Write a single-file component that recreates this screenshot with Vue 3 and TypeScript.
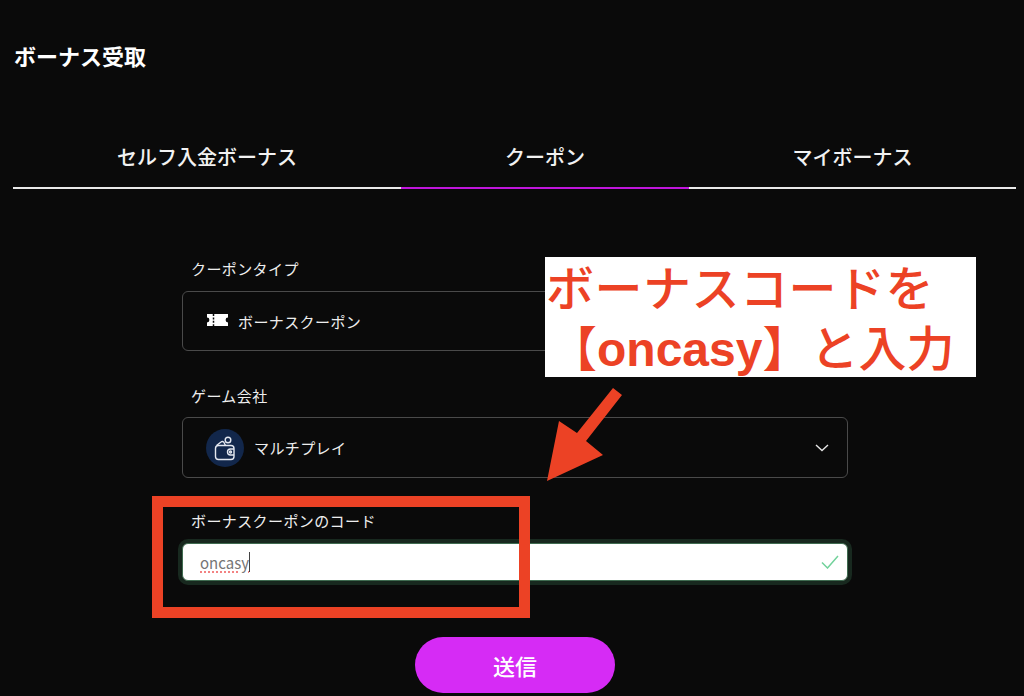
<script setup lang="ts">
const tabs = [
  { label: 'セルフ入金ボーナス', grow: 388, active: false },
  { label: 'クーポン', grow: 288, active: true },
  { label: 'マイボーナス', grow: 327, active: false },
]
</script>

<template>
  <main class="page">
    <h1 class="title">ボーナス受取</h1>
    <nav class="tabs">
      <div
        v-for="t in tabs"
        :key="t.label"
        class="tab"
        :class="{ active: t.active }"
        :style="{ flexGrow: t.grow }"
      >{{ t.label }}</div>
    </nav>

    <form class="form" @submit.prevent>
      <div class="label first">クーポンタイプ</div>
      <div class="select">
        <svg class="ticket" width="22" height="14" viewBox="0 0 22 14">
          <path fill="#fff" d="M0 1h21v3.600a2.400 2.400 0 0 0 0 4.800V13H0V9.400a2.400 2.400 0 0 0 0-4.800z" />
          <path stroke="#0a0a0a" stroke-width="1.500" stroke-dasharray="2 1.400" d="M6.500 1v12" />
        </svg>
        <span>ボーナスクーポン</span>
      </div>

      <div class="label second">ゲーム会社</div>
      <div class="select company">
        <span class="badge">
          <svg width="26" height="26" viewBox="0 0 26 26" fill="none" stroke="#e4e8f0" stroke-width="1.400">
            <rect x="3.500" y="10.500" width="18.500" height="14" rx="3" />
            <path d="M4.500 10.500L9 7a2 2 0 0 1 3 0.500L13.500 10.500" />
            <circle cx="16" cy="5" r="2.800" />
            <path d="M22 14h-3.500a3 3 0 0 0 0 6H22" />
            <circle cx="18.500" cy="17" r="1" />
          </svg>
        </span>
        <span>マルチプレイ</span>
        <svg class="chev" width="14" height="8" viewBox="0 0 14 8" fill="none" stroke="#e6e6e6" stroke-width="1.400">
          <path d="M1 1l6 5.500L13 1" />
        </svg>
      </div>

      <div class="label third">ボーナスクーポンのコード</div>
      <div class="input">
        <span class="typed">oncasy</span><span class="caret"></span>
        <svg class="check" width="18" height="14" viewBox="0 0 18 14" fill="none" stroke="#72d29b" stroke-width="1.500">
          <path d="M1 7.500l5.500 5.500L17 1" />
        </svg>
      </div>

      <button class="send" type="button">送信</button>
    </form>

    <div class="callout">
      <div class="l1">ボーナスコードを</div>
      <div class="l2">【<span class="latin">oncasy</span>】と入力</div>
    </div>
    <svg class="arrow" width="90" height="100" viewBox="0 0 90 100">
      <path fill="#ec4225" d="M68 1L77 8L41 54L58 68L2 94L14 34L32 46Z" />
    </svg>
    <div class="frame"></div>
  </main>
</template>

<style>
html, body { margin: 0; background: #0a0a0a; }
</style>

<style scoped>
.page {
  position: relative;
  width: 1024px;
  height: 696px;
  overflow: hidden;
  background: #0a0a0a;
  color: #fff;
  font-family: "Noto Sans CJK JP", "Noto Sans", sans-serif;
}
.title {
  margin: 0;
  padding: 39px 0 0 14px;
  font-size: 22px;
  line-height: 32px;
  font-weight: 700;
}
.tabs {
  display: flex;
  margin: 60px 8px 0 13px;
}
.tab {
  flex: 1 1 0;
  height: 58px;
  box-sizing: border-box;
  border-bottom: 2px solid #e9e9e9;
  text-align: center;
  font-size: 20px;
  line-height: 52px;
  font-weight: 500;
  color: #f2f2f2;
}
.tab.active { border-bottom-color: #c016dc; }
.form {
  display: flex;
  flex-direction: column;
  width: 666px;
  margin: 0 0 0 182px;
}
.label {
  padding-left: 9px;
  font-size: 15px;
  letter-spacing: 0.4px;
  line-height: 22px;
  color: #eee;
}
.label.first { margin-top: 69px; }
.label.second { margin-top: 34px; }
.label.third { margin-top: 32px; }
.select {
  display: flex;
  align-items: center;
  height: 60px;
  margin-top: 11px;
  padding: 0 23px;
  box-sizing: border-box;
  border: 1px solid #4a4a4a;
  border-radius: 6px;
  font-size: 15px;
  letter-spacing: 0.4px;
  color: #eee;
}
.ticket { margin: -2px 9px 0 1px; }
.company { height: 61px; margin-top: 10px; }
.badge {
  display: flex;
  align-items: center;
  justify-content: center;
  width: 38px;
  height: 38px;
  margin-right: 10px;
  border-radius: 50%;
  background: #12274b;
}
.chev { margin-left: auto; margin-right: -5px; }
.input {
  position: relative;
  display: flex;
  align-items: center;
  height: 38px;
  margin-top: 11px;
  padding-left: 17px;
  box-sizing: border-box;
  background: #fff;
  border: 1px solid #3f6b50;
  border-radius: 6px;
  box-shadow: 0 0 0 4px #18291f;
  font-size: 15px;
  color: #757575;
}
.typed {
  text-decoration: underline dotted #ef5a5a;
  text-underline-offset: 3px;
}
.caret {
  width: 1px;
  height: 20px;
  background: #444;
}
.check { margin-left: auto; margin-right: 8px; }
.send {
  align-self: center;
  width: 200px;
  height: 56px;
  margin-top: 56px;
  border: 0;
  border-radius: 28px;
  background: #d62bf5;
  color: #fff;
  font-family: inherit;
  font-size: 22px;
  font-weight: 500;
}
.callout {
  position: absolute;
  left: 545px;
  top: 257px;
  width: 431px;
  height: 120px;
  background: #fff;
  color: #ec4225;
  font-size: 48px;
  font-weight: 500;
  line-height: 56px;
  white-space: nowrap;
}
.l1 { padding-left: 1px; letter-spacing: 0.5px; }
.l2 { padding-left: 4px; margin-top: 4px; }
.latin {
  font-family: "Liberation Sans", sans-serif;
  font-weight: 700;
}
.arrow {
  position: absolute;
  left: 545px;
  top: 387px;
}
.frame {
  position: absolute;
  left: 152px;
  top: 496px;
  width: 378px;
  height: 122px;
  box-sizing: border-box;
  border: 11px solid #ec4225;
}
</style>
